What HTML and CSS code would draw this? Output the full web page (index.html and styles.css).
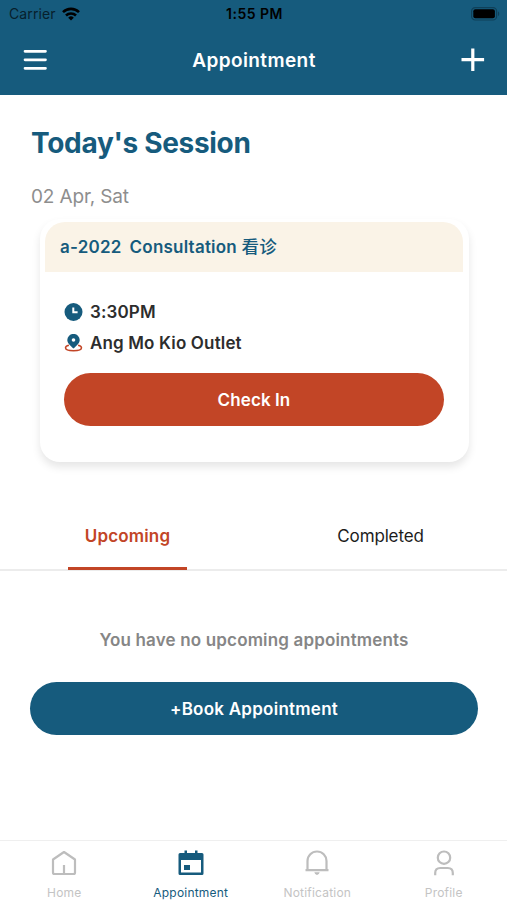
FILE: index.html
```html
<!DOCTYPE html>
<html lang="en">
<head>
    <meta charset="UTF-8">
    <meta name="viewport" content="width=device-width, initial-scale=1.0">
    <title>Appointment</title>
    <link rel="stylesheet" href="styles.css">
</head>
<body>
    <!-- Header -->
    <header class="header">
        <div class="status-bar">
            <div class="carrier">
                <span>Carrier</span>
                <svg width="18" height="14" viewBox="0 0 18 14" fill="none" stroke="#000" stroke-width="2.6">
                    <path d="M1 5.1a11.5 11.5 0 0 1 16 0"/>
                    <path d="M4 8.5a7.2 7.2 0 0 1 10 0"/>
                    <path d="M9 13.6l-2.8-2.9a4 4 0 0 1 5.6 0z" fill="#000" stroke="none"/>
                </svg>
            </div>
            <span class="time">1:55 PM</span>
            <svg class="battery" width="29" height="14" viewBox="0 0 29 14">
                <rect x="0.6" y="0.6" width="25" height="12.4" rx="3.6" fill="none" stroke="#0f4059" stroke-width="1.2"/>
                <rect x="2.3" y="2.3" width="21.6" height="9" rx="2" fill="#000"/>
                <path d="M27 4.6c1.6.5 1.6 4 0 4.5z" fill="#0f4059"/>
            </svg>
        </div>
        <div class="navbar">
            <svg width="24" height="24" viewBox="0 0 24 24" stroke="#fff" stroke-width="2.7" stroke-linecap="round">
                <path d="M2 3.3h20.500M2 11.800h20.500M2 20.300h20.500"/>
            </svg>
            <h1 class="page-title">Appointment</h1>
            <svg width="24" height="24" viewBox="0 0 24 24" stroke="#fff" stroke-width="3.2">
                <path d="M11.800.4v22.6M.5 11.700h22.6"/>
            </svg>
        </div>
    </header>

    <main class="content">
        <!-- Today's session -->
        <section class="session">
            <h2 class="session-title">Today's Session</h2>
            <p class="session-date">02 Apr, Sat</p>

            <div class="card">
                <div class="card-header"><span>a-2022</span><span>Consultation <span class="zh" lang="zh">看诊</span></span></div>
                <div class="card-body">
                    <div class="info-row">
                        <svg width="19" height="18" viewBox="0 0 19 18">
                            <circle cx="9.500" cy="9" r="9" fill="#165b7d"/>
                            <path d="M9.300 4.500v4.700h4.300" fill="none" stroke="#fff" stroke-width="2"/>
                        </svg>
                        <span class="info-time">3:30PM</span>
                    </div>
                    <div class="info-row">
                        <svg width="19" height="18" viewBox="0 0 19 18">
                            <path d="M4.900 11.200C2.700 11.800 1.500 12.700 1.500 13.800c0 1.800 3.600 3 8 3s8-1.200 8-3c0-1.100-1.200-2-3.400-2.600" fill="none" stroke="#c24526" stroke-width="1.500"/>
                            <path d="M9.500 14.500C6.100 11.200 3.300 8.900 3.300 5.900a6.200 6 0 0 1 12.400 0c0 3-2.800 5.300-6.200 8.600z" fill="#165b7d"/>
                            <circle cx="9.500" cy="6" r="1.800" fill="#fff"/>
                        </svg>
                        <span class="info-outlet">Ang Mo Kio Outlet</span>
                    </div>
                    <button class="btn btn-checkin">Check In</button>
                </div>
            </div>
        </section>

        <!-- Tabs -->
        <div class="tabs">
            <div class="tab active"><span>Upcoming</span></div>
            <div class="tab"><span>Completed</span></div>
        </div>

        <section class="empty">
            <p class="empty-text">You have no upcoming appointments</p>
            <button class="btn btn-book">+Book Appointment</button>
        </section>
    </main>

    <!-- Bottom navigation -->
    <nav class="bottom-nav">
        <a class="nav-item nav-home">
            <svg width="28" height="28" viewBox="0 0 28 28" fill="none" stroke="#bdbdbd" stroke-width="2.200" stroke-linejoin="round">
                <path d="M14 3L3 10.500v13q0 1.500 1.500 1.500h19q1.500 0 1.500-1.500v-13zM14 16v9"/>
            </svg>
            <span>Home</span>
        </a>
        <a class="nav-item nav-appointment">
            <svg width="28" height="28" viewBox="0 0 28 28">
                <path d="M7.500 1.500h2.500V4h8V1.500h2.500V4h4.500q1.500 0 1.500 1.500v19q0 1.500-1.500 1.500H3q-1.500 0-1.500-1.500v-19Q1.500 4 3 4h4.500zM4 11v12.500h20V11z" fill="#165b7d" fill-rule="evenodd"/>
                <path d="M7 16h6v5H7z" fill="#165b7d"/>
            </svg>
            <span>Appointment</span>
        </a>
        <a class="nav-item nav-notification">
            <svg width="28" height="28" viewBox="0 0 28 28" fill="none" stroke="#bdbdbd" stroke-width="2.200">
                <path d="M4.500 21V12a9.500 9.500 0 0 1 19 0v9M2.500 21.200h23"/>
                <path d="M11.300 23.300h5.400q-.7 2.700-2.700 2.700t-2.700-2.700z" fill="#bdbdbd" stroke="none"/>
            </svg>
            <span>Notification</span>
        </a>
        <a class="nav-item nav-profile">
            <svg width="28" height="28" viewBox="0 0 28 28" fill="none" stroke="#bdbdbd" stroke-width="2.200">
                <circle cx="14" cy="8.700" r="6.200"/>
                <path d="M5.200 26.300V24q0-5 5-5h7.600q5 0 5 5v2.300"/>
            </svg>
            <span>Profile</span>
        </a>
    </nav>
</body>
</html>
```

FILE: styles.css
```css
* {
    box-sizing: border-box;
}

body {
    background-color: #fff;
    font-family: Inter, "Noto Sans CJK SC", sans-serif;
    margin: 0;
    height: 900px;
    display: flex;
    flex-direction: column;
    overflow: hidden;
}

h1, h2, p {
    margin: 0;
}

svg {
    display: block;
    flex: none;
}

span, p, h1, h2 {
    white-space: nowrap;
}

/* Header */
.header {
    background-color: #165b7d;
    height: 95px;
}

.status-bar {
    display: grid;
    grid-template-columns: 1fr auto 1fr;
    align-items: center;
    height: 27px;
    padding: 0 7px 0 9px;
    font-size: 14px;
    color: #000;
}

.carrier {
    display: flex;
    align-items: center;
    gap: 6px;
    color: #07202c;
    letter-spacing: 0.1px;
}

.time {
    font-weight: 600;
    letter-spacing: 0.5px;
}

.battery {
    justify-self: end;
}

.navbar {
    display: flex;
    align-items: center;
    justify-content: space-between;
    height: 66px;
    padding: 0 22px 0 23px;
}

.page-title {
    color: #fff;
    font-size: 19px;
    font-weight: 600;
    letter-spacing: 0.4px;
}

.content {
    flex: 1;
}

/* Today's session */
.session {
    padding: 28px 38px 0 31px;
}

.session-title {
    color: #165b7d;
    font-size: 28px;
    line-height: 40px;
    font-weight: 700;
    letter-spacing: -0.3px;
}

.session-date {
    color: #8e8e8e;
    font-size: 19px;
    line-height: 24px;
    letter-spacing: -0.15px;
    margin-top: 22px;
}

.card {
    height: 243px;
    margin: 10px 0 0 9px;
    padding: 3px 6px 0 5px;
    border-radius: 20px;
    background-color: #fff;
    box-shadow: 0 5px 8px rgba(0, 0, 0, 0.1);
}

.card-header {
    display: flex;
    align-items: baseline;
    gap: 8px;
    height: 50px;
    padding-left: 15px;
    border-radius: 20px 20px 0 0;
    background-color: #faf3e7;
    color: #165b7d;
    font-size: 17px;
    line-height: 50px;
    font-weight: 600;
    letter-spacing: 0.22px;
}

.zh {
    font-size: 17.5px;
    line-height: 1;
    font-weight: 500;
}

.card-body {
    padding: 25px 19px 0;
}

.info-row {
    display: flex;
    align-items: center;
    gap: 7px;
    height: 30.5px;
    color: #2d2d2d;
    font-size: 17px;
    font-weight: 600;
    letter-spacing: 0.15px;
}

.btn {
    display: block;
    width: 100%;
    height: 53px;
    border: none;
    border-radius: 27px;
    padding: 0;
    color: #fff;
    font-family: inherit;
    font-size: 17px;
    font-weight: 600;
    letter-spacing: 0.25px;
}

.btn-checkin {
    margin-top: 15px;
    background-color: #c24526;
    letter-spacing: 0.1px;
}

.btn-book {
    background-color: #165b7d;
}

/* Tabs */
.tabs {
    display: flex;
    justify-content: space-around;
    height: 69px;
    margin-top: 40px;
    padding-left: 1px;
    border-bottom: 2px solid #ececec;
}

.tab {
    width: 119px;
    height: 68px;
    padding-top: 24px;
    text-align: center;
    font-size: 17px;
    line-height: 21px;
    color: #1c1c1c;
    letter-spacing: -0.15px;
}

.tab.active {
    color: #c24526;
    font-weight: 600;
    letter-spacing: 0.15px;
    border-bottom: 3px solid #c24526;
}

.empty {
    padding: 57px 29px 0 30px;
}

.empty-text {
    color: #868686;
    font-size: 17px;
    line-height: 24px;
    font-weight: 600;
    letter-spacing: 0.16px;
    text-align: center;
    margin-bottom: 30px;
}

/* Bottom navigation */
.bottom-nav {
    display: grid;
    grid-template-columns: repeat(4, 1fr);
    height: 60px;
    padding-left: 1px;
    border-top: 1px solid #efefef;
}

.nav-item {
    display: flex;
    flex-direction: column;
    align-items: center;
    gap: 8px;
    padding-top: 8px;
    color: #c4c4c4;
    font-size: 12px;
    line-height: 16px;
    letter-spacing: 0.2px;
}

.nav-appointment {
    color: #165b7d;
}
```
